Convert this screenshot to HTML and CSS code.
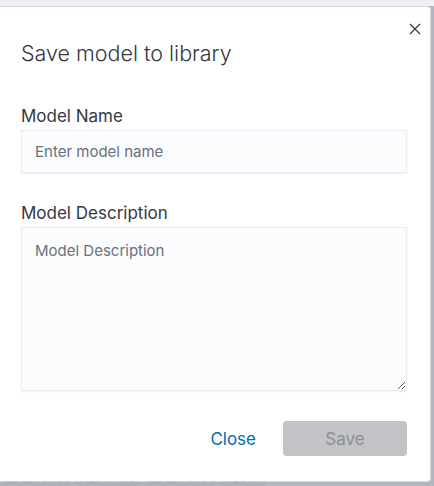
FILE: index.html
```html
<!DOCTYPE html>
<html>
<head>
<meta charset="utf-8">
<link rel="stylesheet" href="styles.css">
</head>
<body>
<div class="page">
  <div class="modal">
    <button class="close-x" aria-label="Close">
      <svg width="12" height="12" viewBox="0 0 12 12"><path d="M1 1L11 11M11 1L1 11" stroke="#343741" stroke-width="1.2" fill="none"/></svg>
    </button>
    <h2 class="title">Save model to library</h2>
    <div class="field">
      <label class="label">Model Name</label>
      <input class="input" type="text" placeholder="Enter model name">
    </div>
    <div class="field field-2">
      <label class="label">Model Description</label>
      <textarea class="textarea" placeholder="Model Description"></textarea>
    </div>
    <div class="footer">
      <button class="btn-link">Close</button>
      <button class="btn-save" disabled>Save</button>
    </div>
  </div>
  <div class="backdrop-text">oxMdXqnXbXaJqJXuUnXbqXl ~lq/xJqNxXqJ/xlqJqXdqXqlqn oxMdXqnXbXaJqJXuUnXbqXl ~lq/xJqNxXqJ/xlqJq</div>
</div>
</body>
</html>
```
FILE: styles.css
```css
html, body {
  margin: 0;
  padding: 0;
}
body {
  background: #b4b7bf;
  font-family: Inter, "Noto Sans", sans-serif;
  width: 434px;
  height: 486px;
  overflow: hidden;
}
.page {
  position: relative;
  height: 486px;
  padding-top: 6px;
  box-sizing: border-box;
  background: linear-gradient(#eef0f3 0, #eef0f3 6px, transparent 6px);
}
.modal {
  position: relative;
  width: 432px;
  height: 476px;
  margin-left: -1px;
  box-sizing: border-box;
  background: #fff;
  border: 1px solid #d3dae6;
  border-left: none;
  border-radius: 0 4px 4px 0;
  padding: 32px 23px 0 22px;
}
.close-x {
  position: absolute;
  top: 12px;
  right: 5px;
  width: 20px;
  height: 20px;
  padding: 0;
  border: none;
  background: none;
  display: flex;
  align-items: center;
  justify-content: center;
}
.title {
  margin: 0;
  font-weight: 300;
  font-size: 21.5px;
  line-height: 28px;
  color: #343741;
}
.field {
  margin-top: 39px;
  display: flex;
  flex-direction: column;
}
.field-2 {
  margin-top: 30px;
}
.label {
  font-size: 17px;
  font-weight: 400;
  line-height: 20px;
  color: #343741;
  margin-bottom: 4px;
}
.input, .textarea {
  box-sizing: border-box;
  width: 386px;
  background: #fbfcfd;
  border: 1px solid #e9edf3;
  box-shadow: 0 1px 2px rgba(0,0,0,0.06);
  border-radius: 0;
  font-family: Inter, "Noto Sans", sans-serif;
  font-size: 15px;
  color: #343741;
  padding: 0 13px;
  outline: none;
}
.input {
  height: 43px;
}
.textarea {
  height: 164px;
  padding-top: 13px;
  resize: both;
}
.input::placeholder, .textarea::placeholder {
  color: #69707d;
}
.footer {
  margin-top: 30px;
  display: flex;
  justify-content: flex-end;
  align-items: center;
  gap: 27px;
}
.btn-link {
  border: none;
  background: none;
  padding: 0;
  font-family: Inter, "Noto Sans", sans-serif;
  font-size: 17px;
  color: #006bb8;
}
.btn-save {
  width: 124px;
  height: 35px;
  border: none;
  border-radius: 4px;
  background: #c2c3c6;
  color: #8c8e93;
  font-family: Inter, "Noto Sans", sans-serif;
  font-size: 17px;
}
.backdrop-text {
  position: absolute;
  left: 0;
  top: 481px;
  font-size: 5px;
  line-height: 5px;
  color: #a3a6ae;
  white-space: nowrap;
  overflow: hidden;
  width: 434px;
}
```
